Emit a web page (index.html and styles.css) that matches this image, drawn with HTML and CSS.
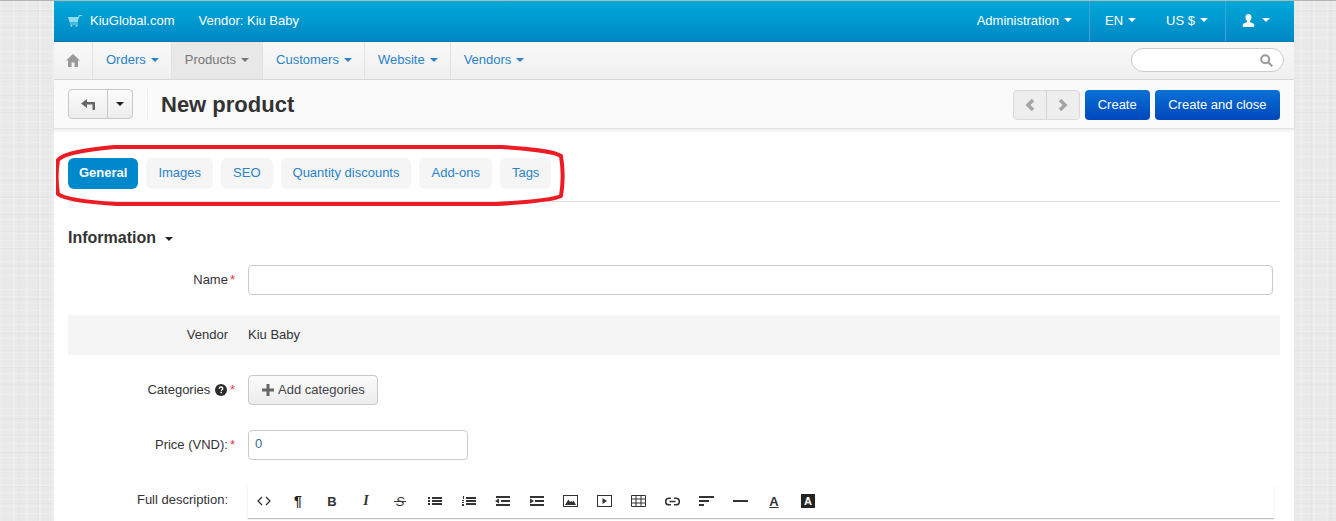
FILE: index.html
```html
<!DOCTYPE html>
<html>
<head>
    <title>New product</title>
    <link rel="stylesheet" href="styles.css">
</head>
<body>
    <div class="container">
        <div class="topbar">
            <div class="topbar-left">
                <svg class="cart-icon" width="14" height="13" viewBox="0 0 14 13" fill="currentColor"><path d="M0 3h10.600l-.8 5.500H1.600zM2 9.500h8v1H2zM10 3.500L10.800 1H14v1h-2.400l-.9 3z"/><circle cx="3.500" cy="11.800" r="1"/><circle cx="8.500" cy="11.800" r="1"/></svg>
                <span class="brand">KiuGlobal.com</span>
                <span>Vendor: Kiu Baby</span>
            </div>
            <div class="topbar-right">
                <div class="top-item top-admin">Administration <i class="caret"></i></div>
                <div class="top-item top-lang">EN <i class="caret"></i></div>
                <div class="top-item top-cur">US $ <i class="caret"></i></div>
                <div class="top-item top-user">
                    <svg width="13" height="13" viewBox="0 0 13 13" fill="currentColor"><path d="M6.500 0C8.400 0 9.500 1.400 9.500 3.400c0 1.500-.7 2.800-1.600 3.500v1l4.300 2V13H.8v-3.100l4.300-2v-1C4.200 6.200 3.500 4.900 3.500 3.400 3.500 1.400 4.600 0 6.500 0z"/></svg>
                    <i class="caret"></i>
                </div>
            </div>
        </div>

        <div class="navbar">
            <div class="nav-home">
                <svg width="14" height="13" viewBox="0 0 14 13" fill="currentColor"><path d="M7 0l7 6.500h-2V13H8.500V8.500h-3V13H2V6.500H0z"/></svg>
            </div>
            <div class="nav-item">Orders <i class="caret"></i></div>
            <div class="nav-item active">Products <i class="caret"></i></div>
            <div class="nav-item">Customers <i class="caret"></i></div>
            <div class="nav-item">Website <i class="caret"></i></div>
            <div class="nav-item last">Vendors <i class="caret"></i></div>
            <div class="nav-search">
                <svg width="13" height="13" viewBox="0 0 13 13" fill="none" stroke="currentColor" stroke-width="2"><circle cx="5.200" cy="5.200" r="4"/><path d="M8.200 8.200l4 4"/></svg>
            </div>
        </div>

        <div class="titlebar">
            <div class="btn-group">
                <div class="btn btn-back">
                    <svg width="14" height="11" viewBox="0 0 14 11" fill="currentColor"><path d="M6 0v3h8v8h-2.500V5.500H6V9L0 4.500z"/></svg>
                </div>
                <div class="btn btn-more"><i class="caret"></i></div>
            </div>
            <h1>New product</h1>
            <div class="title-actions">
                <div class="pager">
                    <div class="pager-btn">
                        <svg width="10" height="12" viewBox="0 0 10 12" fill="none" stroke="currentColor" stroke-width="3.500"><path d="M8 1L3 6l5 5"/></svg>
                    </div>
                    <div class="pager-btn">
                        <svg width="10" height="12" viewBox="0 0 10 12" fill="none" stroke="currentColor" stroke-width="3.500"><path d="M2 1l5 5-5 5"/></svg>
                    </div>
                </div>
                <div class="btn-primary">Create</div>
                <div class="btn-primary">Create and close</div>
            </div>
        </div>

        <div class="content">
            <div class="tabs">
                <div class="tab active">General</div>
                <div class="tab">Images</div>
                <div class="tab">SEO</div>
                <div class="tab">Quantity discounts</div>
                <div class="tab">Add-ons</div>
                <div class="tab">Tags</div>
            </div>

            <h2>Information <i class="caret"></i></h2>

            <div class="field field-name">
                <label>Name<em>*</em></label>
                <div class="input input-wide"></div>
            </div>
            <div class="field field-band">
                <label class="plain">Vendor</label>
                <div class="value">Kiu Baby</div>
            </div>
            <div class="field field-cat">
                <label>Categories
                    <svg class="help" width="12" height="12" viewBox="0 0 12 12"><circle cx="6" cy="6" r="6" fill="#2b2b2b"/><path d="M4.200 4.700C4.300 3.600 5 3 6 3s1.800.6 1.800 1.500c0 1.200-1.500 1.200-1.500 2.400" fill="none" stroke="#fff" stroke-width="1.300"/><rect x="5.500" y="7.800" width="1.500" height="1.400" fill="#fff"/></svg><em>*</em>
                </label>
                <div class="btn-add">
                    <svg width="12" height="12" viewBox="0 0 12 12" fill="currentColor"><path d="M4.500 0h3v4.500H12v3H7.500V12h-3V7.500H0v-3h4.500z"/></svg>
                    <span class="value">Add categories</span>
                </div>
            </div>
            <div class="field field-price">
                <label>Price (VND):<em>*</em></label>
                <div class="input input-price">0</div>
            </div>
            <div class="field field-desc">
                <label class="plain desc-label">Full description:</label>
                <div class="editor">
                    <div class="tool"><svg width="14" height="10" viewBox="0 0 14 10" fill="none" stroke="currentColor" stroke-width="1.300"><path d="M5 1L1 5l4 4M9 1l4 4-4 4"/></svg></div>
                    <div class="tool tool-text tool-para">¶</div>
                    <div class="tool tool-text">B</div>
                    <div class="tool tool-text tool-italic">I</div>
                    <div class="tool tool-text tool-strike"><span>S</span></div>
                    <div class="tool"><svg width="15" height="10" viewBox="0 0 15 10" fill="currentColor"><path d="M5 1h10v2H5zM5 4h10v2H5zM5 7h10v2H5zM1 1h2v2H1zM1 4h2v2H1zM1 7h2v2H1z"/></svg></div>
                    <div class="tool"><svg width="15" height="10" viewBox="0 0 15 10" fill="currentColor"><path d="M5 1h10v2H5zM5 4h10v2H5zM5 7h10v2H5zM2 0h1v3H2zM1 4h2v1H1zM1 6h2v1H1zM1 8h2v2H1z"/></svg></div>
                    <div class="tool"><svg width="15" height="10" viewBox="0 0 15 10" fill="currentColor"><path d="M1 0h14v2H1zM6 4h9v2H6zM1 8h14v2H1zM4 2.500v5L0 5z"/></svg></div>
                    <div class="tool"><svg width="15" height="10" viewBox="0 0 15 10" fill="currentColor"><path d="M1 0h14v2H1zM6 4h9v2H6zM1 8h14v2H1zM1 2.500v5L5 5z"/></svg></div>
                    <div class="tool"><svg width="15" height="12" viewBox="0 0 15 12"><rect x=".5" y=".5" width="14" height="11" fill="none" stroke="currentColor"/><path d="M2 10l3.500-5.500L7 7l1.500-1 1 1 1-1.500L13 10z" fill="currentColor"/></svg></div>
                    <div class="tool"><svg width="15" height="12" viewBox="0 0 15 12"><rect x=".5" y=".5" width="14" height="11" fill="none" stroke="currentColor"/><path d="M5.500 3v6l4.500-3z" fill="currentColor"/></svg></div>
                    <div class="tool"><svg width="15" height="12" viewBox="0 0 15 12" fill="none" stroke="currentColor"><path d="M.5.500h14v11H.5zM.5 4h14M.5 8h14M5 .500v11M10 .500v11"/></svg></div>
                    <div class="tool"><svg width="15" height="9" viewBox="0 0 15 9" fill="none" stroke="currentColor" stroke-width="1.600"><path d="M6 1.200H4a3.300 3.300 0 0 0 0 6.600h2M9 1.200h2a3.300 3.300 0 0 1 0 6.600H9M4.500 4.500h6"/></svg></div>
                    <div class="tool"><svg width="15" height="10" viewBox="0 0 15 10" fill="currentColor"><path d="M0 0h15v2H0zM0 4h10v2H0zM0 8h5v2H0z"/></svg></div>
                    <div class="tool"><svg width="15" height="2" viewBox="0 0 15 2" fill="currentColor"><path d="M0 0h15v2H0z"/></svg></div>
                    <div class="tool tool-color">A</div>
                    <div class="tool tool-fill"><span>A</span></div>
                </div>
            </div>
        </div>

        <svg class="marker" width="512" height="64" viewBox="0 0 512 64" fill="none" stroke="#ed1c24" stroke-width="4" stroke-linejoin="round">
            <path d="M2 16C8 9 30 6 58 3H446c30 2 52 4 59 9 2 12 2 28 0 40-8 4-30 6-65 8H60C30 58 8 55 2 50 0 38 0 28 2 16z"/>
        </svg>
    </div>
</body>
</html>
```
FILE: styles.css
```css
* {
    box-sizing: border-box;
    margin: 0;
    padding: 0;
}

html, body {
    height: 100%;
    overflow: hidden;
}

body {
    font-family: "Liberation Sans", Arial, sans-serif;
    font-size: 13px;
    color: #333333;
    background-color: #e9e9e9;
    background-image:
        repeating-linear-gradient(0deg, rgba(255, 255, 255, 0.2) 0, rgba(255, 255, 255, 0.2) 1px, transparent 1px, transparent 7px),
        repeating-linear-gradient(90deg, rgba(255, 255, 255, 0.2) 0, rgba(255, 255, 255, 0.2) 2px, transparent 2px, transparent 13px),
        repeating-linear-gradient(0deg, rgba(0, 0, 0, 0.02) 0, rgba(0, 0, 0, 0.02) 1px, transparent 1px, transparent 17px),
        repeating-linear-gradient(90deg, rgba(0, 0, 0, 0.02) 0, rgba(0, 0, 0, 0.02) 1px, transparent 1px, transparent 19px);
    border-top: 1px solid #b5b5b5;
}

.container {
    position: relative;
    width: 1240px;
    margin-left: 54px;
    height: 100%;
    background: #ffffff;
}

.caret {
    display: inline-block;
    width: 0;
    height: 0;
    border-top: 4px solid currentColor;
    border-left: 4px solid transparent;
    border-right: 4px solid transparent;
    vertical-align: middle;
    margin-left: 2px;
}

/* top blue bar */
.topbar {
    display: flex;
    justify-content: space-between;
    height: 41px;
    padding-bottom: 2px;
    color: #ffffff;
    background: linear-gradient(to bottom, #00a9d8, #0088c4);
    border-bottom: 1px solid #0079b0;
}

.topbar-left {
    display: flex;
    align-items: center;
    padding-left: 14px;
}

.cart-icon {
    color: #8fdcf0;
    margin-right: 8px;
}

.brand {
    margin-right: 24px;
}

.topbar-right {
    display: flex;
    align-items: stretch;
}

.top-item {
    display: flex;
    align-items: center;
    gap: 3px;
}

.top-admin {
    padding-right: 17px;
    margin-bottom: -2px;
    border-right: 1px solid #3fa2d8;
    padding-bottom: 2px;
}

.top-lang {
    padding-left: 15px;
    padding-right: 30px;
}

.top-cur {
    padding-right: 17px;
    margin-bottom: -2px;
    padding-bottom: 2px;
    border-right: 1px solid #3fa2d8;
}

.top-user {
    width: 68px;
    padding-left: 16px;
    gap: 5px;
}

/* menu */
.navbar {
    display: flex;
    align-items: stretch;
    height: 38px;
    background: linear-gradient(to bottom, #f8f8f8, #f0f0f0);
    border-bottom: 1px solid #d8d8d8;
}

.nav-home {
    display: flex;
    align-items: center;
    justify-content: center;
    width: 39px;
    color: #999999;
    border-right: 1px solid #e2e2e2;
}

.nav-item {
    display: flex;
    align-items: center;
    gap: 3px;
    padding: 0 12px 2px 13px;
    color: #2a83c9;
    border-right: 1px solid #e2e2e2;
}

.nav-item.active {
    padding-right: 13px;
    color: #777777;
    background: #e8e8e8;
}

.nav-item.last {
    border-right: none;
}

.nav-search {
    display: flex;
    align-items: center;
    justify-content: flex-end;
    width: 153px;
    height: 24px;
    margin: 6px 10px 0 auto;
    padding-right: 10px;
    color: #9a9a9a;
    background: #ffffff;
    border: 1px solid #cccccc;
    border-radius: 12px;
}

/* title row */
.titlebar {
    display: flex;
    align-items: center;
    height: 49px;
    padding: 0 14px;
    background: #fafafa;
    border-bottom: 1px solid #e4e4e4;
    box-shadow: 0 2px 3px rgba(0, 0, 0, 0.08);
}

.btn-group {
    display: flex;
    height: 30px;
    color: #666666;
    background: linear-gradient(to bottom, #fbfbfb, #ececec);
    border: 1px solid #c8c8c8;
    border-radius: 4px;
}

.btn {
    display: flex;
    align-items: center;
    justify-content: center;
}

.btn-back {
    width: 39px;
    border-right: 1px solid #c8c8c8;
}

.btn-more {
    width: 24px;
    color: #222222;
}

.btn-more .caret {
    margin-left: 0;
}

.titlebar h1 {
    margin-left: 14px;
    padding-left: 13px;
    height: 30px;
    line-height: 32px;
    font-size: 22px;
    color: #333333;
    border-left: 1px solid #eeeeee;
}

.title-actions {
    display: flex;
    align-items: center;
    margin-left: auto;
    margin-top: 2px;
    gap: 5px;
}

.pager {
    display: flex;
    height: 30px;
    color: #a5a5a5;
    background: #eeeeee;
    border: 1px solid #dadada;
    border-radius: 4px;
}

.pager-btn {
    display: flex;
    align-items: center;
    justify-content: center;
    width: 32px;
}

.pager-btn:first-child {
    width: 33px;
    border-right: 1px solid #d5d5d5;
}

.btn-primary {
    height: 30px;
    line-height: 29px;
    padding: 0 13px;
    color: #ffffff;
    background: linear-gradient(to bottom, #0a71d6, #0047bb);
    border-radius: 4px;
}

.btn-primary:last-child {
    padding: 0 13.5px;
}

/* form */
.content {
    padding: 0 14px;
}

.tabs {
    display: flex;
    gap: 8px;
    height: 73px;
    padding-top: 29px;
    border-bottom: 1px solid #dddddd;
}

.tab {
    height: 31px;
    line-height: 30px;
    padding: 0 12px;
    color: #2a83c9;
    background: #f5f5f5;
    border-radius: 6px;
}

.tab.active {
    padding: 0 11px;
    color: #ffffff;
    font-weight: bold;
    background: #0088cc;
}

h2 {
    margin-top: 26px;
    font-size: 16px;
    line-height: 20px;
    color: #333333;
}

h2 .caret {
    margin-left: 5px;
    color: #222222;
}

.field {
    display: flex;
    align-items: center;
}

.field label {
    flex: none;
    width: 167px;
    margin-right: 13px;
    margin-bottom: 2px;
    text-align: right;
}

.field label em {
    margin-left: 2px;
    font-style: normal;
    color: #e8344e;
}

.field label.plain {
    padding-right: 7px;
}

.value {
    margin-bottom: 2px;
}

.field-name {
    margin-top: 17px;
    margin-right: 7px;
}

.input {
    height: 30px;
    line-height: 26px;
    padding: 0 6px;
    color: #3d6c8f;
    background: #ffffff;
    border: 1px solid #cccccc;
    border-radius: 4px;
}

.input-wide {
    flex: 1;
}

.input-price {
    width: 220px;
}

.field-band {
    height: 40px;
    margin-top: 20px;
    background: #f5f5f5;
}

.field-cat {
    margin-top: 20px;
}

.help {
    vertical-align: -2px;
    margin-left: 1px;
    margin-right: 1px;
}

.btn-add {
    display: flex;
    align-items: center;
    gap: 4px;
    width: 130px;
    height: 30px;
    padding-left: 13px;
    color: #444444;
    background: linear-gradient(to bottom, #fbfbfb, #ececec);
    border: 1px solid #c8c8c8;
    border-radius: 4px;
}

.btn-add svg {
    color: #666666;
}

.field-price {
    margin-top: 25px;
}

.field-desc {
    align-items: flex-start;
    margin-top: 24px;
    margin-right: 6px;
}

.desc-label {
    padding-top: 8px;
}

.editor {
    display: flex;
    flex: 1;
    align-items: center;
    height: 34px;
    color: #333333;
    background: #ffffff;
    box-shadow: 0 1px 1px rgba(0, 0, 0, 0.25);
}

.tool {
    display: flex;
    align-items: center;
    justify-content: center;
    width: 34px;
    padding-right: 2px;
    flex: none;
}

.tool-text {
    font-weight: bold;
    font-size: 13px;
}

.tool-para {
    font-size: 14px;
    color: #222222;
}

.tool-italic {
    font-family: "Liberation Serif", serif;
    font-style: italic;
    font-size: 14px;
}

.tool-strike span {
    padding: 0 2px;
    font-weight: normal;
    font-style: italic;
    background: linear-gradient(#333333, #333333) center / 100% 1px no-repeat;
}

.tool-color {
    font-weight: bold;
    text-decoration: underline;
}

.tool-fill span {
    width: 14px;
    height: 14px;
    line-height: 14px;
    text-align: center;
    font-size: 11px;
    font-weight: bold;
    color: #ffffff;
    background: #222222;
}

.marker {
    position: absolute;
    left: 2px;
    top: 143px;
}
```
